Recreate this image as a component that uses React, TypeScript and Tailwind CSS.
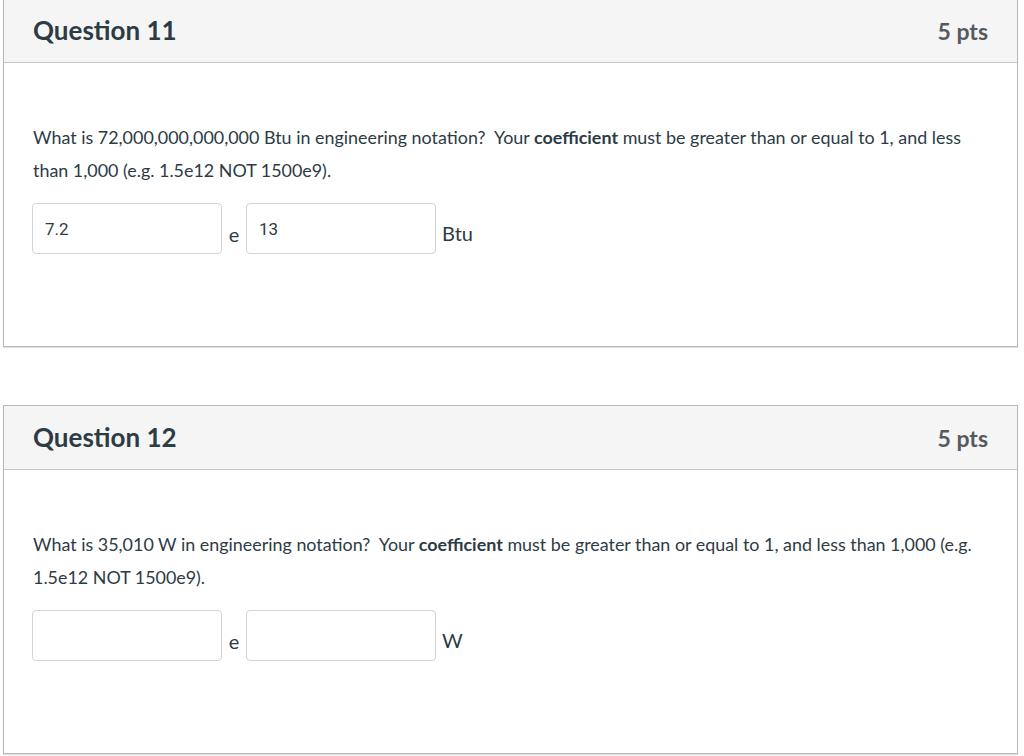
import React from 'react';

type Q = {
  title: string;
  pts: string;
  before: string;
  after: string;
  coef: string;
  exp: string;
  unit: string;
};

const questions: Q[] = [
  {
    title: 'Question 11',
    pts: '5 pts',
    before: 'What is 72,000,000,000,000 Btu in engineering notation?\u00a0 Your ',
    after:
      ' must be greater than or equal to 1, and less than 1,000 (e.g. 1.5e12 NOT 1500e9).',
    coef: '7.2',
    exp: '13',
    unit: 'Btu',
  },
  {
    title: 'Question 12',
    pts: '5 pts',
    before: 'What is 35,010 W in engineering notation?\u00a0 Your ',
    after:
      ' must be greater than or equal to 1, and less than 1,000 (e.g. 1.5e12 NOT 1500e9).',
    coef: '',
    exp: '',
    unit: 'W',
  },
];

function QuestionCard({ q }: { q: Q }) {
  return (
    <div className="border border-[#b9b9b9] bg-white shadow-[0_1px_1px_rgba(0,0,0,0.12)]">
      {/* Header */}
      <div className="h-[64px] bg-[#f5f5f5] border-b border-[#c7c7c7] px-[29px] flex items-center justify-between">
        <h2 className="text-[26px] font-bold text-[#2d3b45]">{q.title}</h2>
        <div className="text-[23px] font-bold text-[#555a5e] mt-[2px]">{q.pts}</div>
      </div>

      {/* Body */}
      <div className="pl-[28px] pr-[29px] pt-[58px] pb-[92px]">
        <p className="pl-[1px] text-[17.9px] leading-[33px] text-[#2d3b45]">
          {q.before}
          <strong className="font-bold">coefficient</strong>
          {q.after}
        </p>
        <div className="mt-[16px] flex items-center">
          <input
            readOnly
            value={q.coef}
            className="w-[190px] h-[51px] border border-[#cfd4d8] rounded-[4px] px-[12px] text-[17px] text-[#2d3b45] outline-none"
            style={{ fontFamily: 'Roboto, "Liberation Sans", sans-serif' }}
          />
          <span className="w-[24px] text-center pt-[10px] text-[20px] text-[#2d3b45]">e</span>
          <input
            readOnly
            value={q.exp}
            className="w-[190px] h-[51px] border border-[#cfd4d8] rounded-[4px] px-[12px] text-[17px] text-[#2d3b45] outline-none"
            style={{ fontFamily: 'Roboto, "Liberation Sans", sans-serif' }}
          />
          <span className="pl-[6px] pt-[9px] text-[20px] text-[#2d3b45]">{q.unit}</span>
        </div>
      </div>
    </div>
  );
}

export default function App() {
  return (
    <div
      className="min-h-screen bg-white pl-[3px] pb-[2px]"
      style={{ fontFamily: 'Lato, "Open Sans", sans-serif' }}
    >
      <div className="w-[1015px] -mt-[2px] flex flex-col gap-[58px]">
        {questions.map((q) => (
          <QuestionCard key={q.title} q={q} />
        ))}
      </div>
    </div>
  );
}
